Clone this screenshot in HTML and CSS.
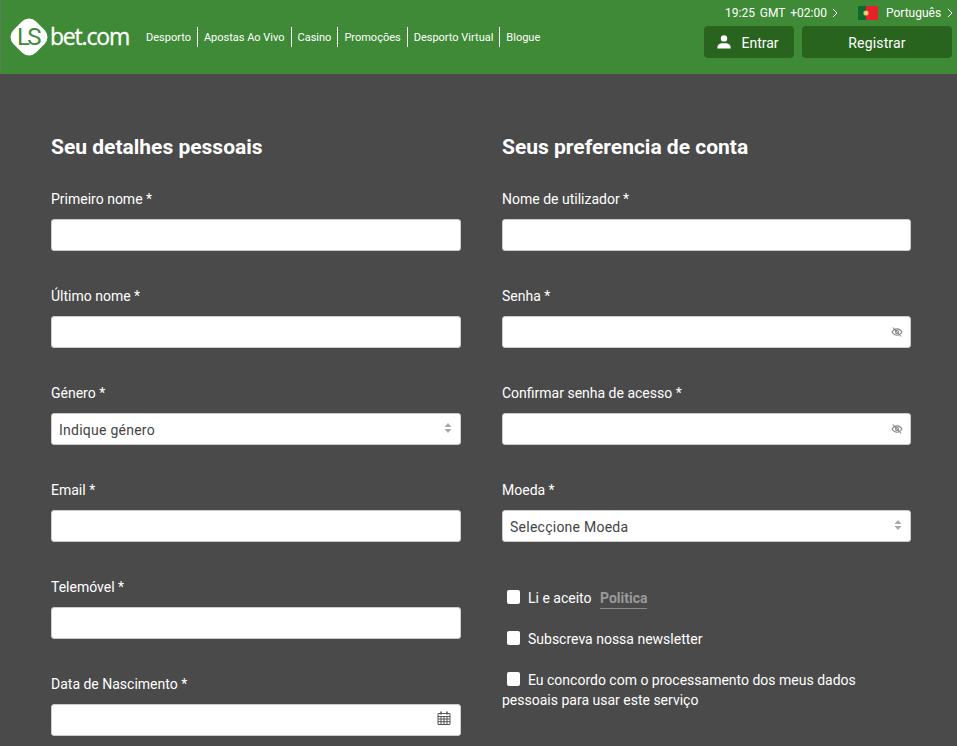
FILE: index.html
```html
<!DOCTYPE html>
<html lang="pt">
<head>
<meta charset="utf-8">
<title>LSbet.com</title>
<link rel="stylesheet" href="styles.css">
</head>
<body>
<header class="topbar">
  <a class="logo" href="#">
    <span class="logo-mark"><span class="logo-ls">LS</span></span>
    <span class="logo-word">bet.com</span>
  </a>
  <nav class="mainnav">
    <a href="#">Desporto</a>
    <a href="#">Apostas Ao Vivo</a>
    <a href="#">Casino</a>
    <a href="#">Promoções</a>
    <a href="#">Desporto Virtual</a>
    <a href="#">Blogue</a>
  </nav>
  <div class="account">
    <div class="meta">
      <span class="clock">19:25 GMT +02:00<svg class="chev" viewBox="0 0 6 10"><path d="M1 1l4 4-4 4"/></svg></span>
      <span class="lang">
        <svg class="flag" viewBox="0 0 20 14"><rect width="8" height="14" fill="#0b6a2e"/><rect x="8" width="12" height="14" fill="#e8202a"/><circle cx="8" cy="7" r="2.6" fill="#e9c33b"/><circle cx="8" cy="7" r="1.4" fill="#d9d2c0"/></svg>
        <span>Português</span><svg class="chev" viewBox="0 0 6 10"><path d="M1 1l4 4-4 4"/></svg>
      </span>
    </div>
    <div class="auth">
      <button class="btn btn-login" type="button">
        <svg class="user" viewBox="0 0 14 14"><circle cx="7" cy="3.4" r="3.2"/><path d="M0.400 13.500v-1.500C0.400 9.600 2.800 8.200 5 8.200h4c2.200 0 4.600 1.400 4.600 3.800v1.500z"/></svg>
        Entrar
      </button>
      <button class="btn btn-register" type="button">Registrar</button>
    </div>
  </div>
</header>
<main class="form-wrap">
  <section class="col">
    <h2>Seu detalhes pessoais</h2>
    <div class="field"><label>Primeiro nome *</label><div class="control"><input type="text"></div></div>
    <div class="field"><label>Último nome *</label><div class="control"><input type="text"></div></div>
    <div class="field"><label>Género *</label>
      <div class="control select"><span>Indique género</span>
        <svg class="updown" viewBox="0 0 8 10"><path d="M4 0l3.600 4H.4zM4 10L.4 6h7.200z"/></svg></div></div>
    <div class="field"><label>Email *</label><div class="control"><input type="text"></div></div>
    <div class="field"><label>Telemóvel *</label><div class="control"><input type="text"></div></div>
    <div class="field"><label>Data de Nascimento *</label>
      <div class="control"><input type="text">
        <svg class="cal" viewBox="0 0 14 14"><path d="M1 2.500h12v11H1zM1 5.500h12M1 8h12M1 10.700h12M4 5.500v8M7 5.500v8M10 5.500v8" /><path d="M4 .6v3M10 .6v3" stroke-width="1.500"/></svg></div></div>
  </section>
  <section class="col">
    <h2>Seus preferencia de conta</h2>
    <div class="field"><label>Nome de utilizador *</label><div class="control"><input type="text"></div></div>
    <div class="field"><label>Senha *</label><div class="control"><input type="password">
      <svg class="eye" viewBox="0 0 14 12"><path d="M1 6c1.500-2.400 3.500-3.800 6-3.800s4.500 1.400 6 3.800c-1.500 2.400-3.500 3.800-6 3.800S2.500 8.400 1 6z"/><circle cx="7" cy="6" r="1.800"/><path d="M2 .6l10 10.800"/></svg></div></div>
    <div class="field"><label>Confirmar senha de acesso *</label><div class="control"><input type="password">
      <svg class="eye" viewBox="0 0 14 12"><path d="M1 6c1.500-2.400 3.500-3.800 6-3.800s4.500 1.400 6 3.800c-1.500 2.400-3.500 3.800-6 3.800S2.500 8.400 1 6z"/><circle cx="7" cy="6" r="1.800"/><path d="M2 .6l10 10.800"/></svg></div></div>
    <div class="field"><label>Moeda *</label>
      <div class="control select"><span>Selecçione Moeda</span>
        <svg class="updown" viewBox="0 0 8 10"><path d="M4 0l3.600 4H.4zM4 10L.4 6h7.200z"/></svg></div></div>
    <div class="checks">
      <div class="check"><span class="box"></span>Li e aceito <a class="policy" href="#">Politica</a></div>
      <div class="check"><span class="box"></span>Subscreva nossa newsletter</div>
      <div class="check check-wrap"><span class="box"></span>Eu concordo com o processamento dos meus dados pessoais para usar este serviço</div>
    </div>
  </section>
</main>
</body>
</html>
```
FILE: styles.css
```css
* { box-sizing: border-box; }
html, body { margin: 0; height: 100%; }
body {
  background: #4a4a4a;
  color: #fff;
  font-family: Roboto, "Liberation Sans", sans-serif;
  overflow: hidden;
}
.topbar {
  height: 74px;
  background: #3e8a36;
  display: flex;
  border-left: 1px solid #5a7f56;
}
.logo {
  display: flex;
  align-items: center;
  height: 74px;
  padding: 0 0 0 9px;
  color: #fff;
  text-decoration: none;
  flex: none;
}
.logo-mark {
  width: 38px;
  height: 38px;
  position: relative;
  display: flex;
  align-items: center;
  justify-content: center;
}
.logo-mark::before {
  content: "";
  position: absolute;
  left: 3px;
  top: 3px;
  width: 32px;
  height: 32px;
  background: #fff;
  border-radius: 10px;
  transform: rotate(45deg);
}
.logo-ls {
  position: relative;
  color: #3e8a36;
  font-size: 24px;
  letter-spacing: -2.500px;
  font-weight: 400;
  margin-left: -2px;
}
.logo-word {
  font-family: "Open Sans", Roboto, sans-serif;
  font-size: 23px;
  letter-spacing: -1.200px;
  margin: -2px 0 0 2px;
  -webkit-text-stroke: 0.3px #fff;
}
.mainnav {
  display: flex;
  align-items: center;
  height: 20px;
  margin: 27px 0 0 17px;
  flex: none;
}
.mainnav a {
  color: #fff;
  text-decoration: none;
  font-size: 11px;
  font-weight: 400;
  padding: 1px 6px 0;
  height: 20px;
  line-height: 20px;
  border-left: 1px solid #fff;
  white-space: nowrap;
}
.mainnav a:first-child { border-left: 0; padding-left: 0; }
.account {
  margin-left: auto;
  width: 253px;
  padding-right: 5px;
  flex: none;
}
.meta {
  height: 26px;
  display: flex;
  align-items: center;
  font-size: 12px;
  white-space: nowrap;
}
.clock { margin-left: 21px; word-spacing: 2px; }
.lang { margin-left: 20px; display: flex; align-items: center; }
.flag { width: 20px; height: 14px; margin-right: 8px; }
.chev { width: 6px; height: 10px; margin-left: 5px; fill: none; stroke: #fff; stroke-width: 1; vertical-align: -1px; }
.lang .chev { margin-left: 6px; }
.auth { display: flex; gap: 8px; }
.btn {
  height: 32px;
  border: 0;
  border-radius: 4px;
  padding: 2px 0 0;
  background: #28641e;
  color: #fff;
  font-family: inherit;
  font-size: 14px;
  display: flex;
  align-items: center;
  justify-content: center;
}
.btn-login { width: 90px; gap: 10px; padding-right: 2px; }
.btn-register { width: 150px; letter-spacing: 0.150px; }
.user { width: 14px; height: 14px; fill: #fff; margin-top: -2px; }
.form-wrap {
  display: grid;
  grid-template-columns: 410px 409px;
  column-gap: 41px;
  padding: 59px 0 0 51px;
}
h2 {
  margin: 0 0 28px;
  font-size: 21px;
  line-height: 28px;
  font-weight: 700;
}
.field { height: 97px; }
.field label {
  display: block;
  height: 20px;
  font-size: 14px;
  line-height: 20px;
  margin: 0 0 10px;
}
.control {
  position: relative;
  height: 32px;
  background: #fff;
  border: 1px solid #ccc;
  border-radius: 3px;
}
.control input {
  width: 100%;
  height: 100%;
  border: 0;
  background: transparent;
  outline: 0;
  padding: 0 7px;
}
.select {
  color: #444;
  font-size: 14px;
  line-height: 32px;
  padding-left: 7px;
  letter-spacing: 0.250px;
}
.updown, .eye, .cal { position: absolute; top: 50%; }
.updown { width: 8px; height: 10px; right: 8px; margin-top: -6px; fill: #aaa; }
.eye { width: 12px; height: 10px; right: 7px; margin-top: -5px; fill: none; stroke: #888; stroke-width: 1.300; }
.cal { width: 14px; height: 14px; right: 9px; margin-top: -9px; fill: none; stroke: #555; stroke-width: 1; }
.checks { font-size: 14px; line-height: 21px; padding-top: 11px; }
.check { margin-bottom: 20px; padding-left: 26px; position: relative; }
.check-wrap { padding-left: 0; text-indent: 26px; line-height: 20px; }
.box {
  position: absolute;
  left: 5px;
  top: 2px;
  width: 13px;
  height: 14px;
  border-radius: 2px;
  background: #fff;
}
.policy {
  color: #9a9a9a;
  font-weight: 700;
  text-decoration: none;
  border-bottom: 1px solid #8a8a8a;
  margin-left: 5px;
  padding-bottom: 2px;
}
```
